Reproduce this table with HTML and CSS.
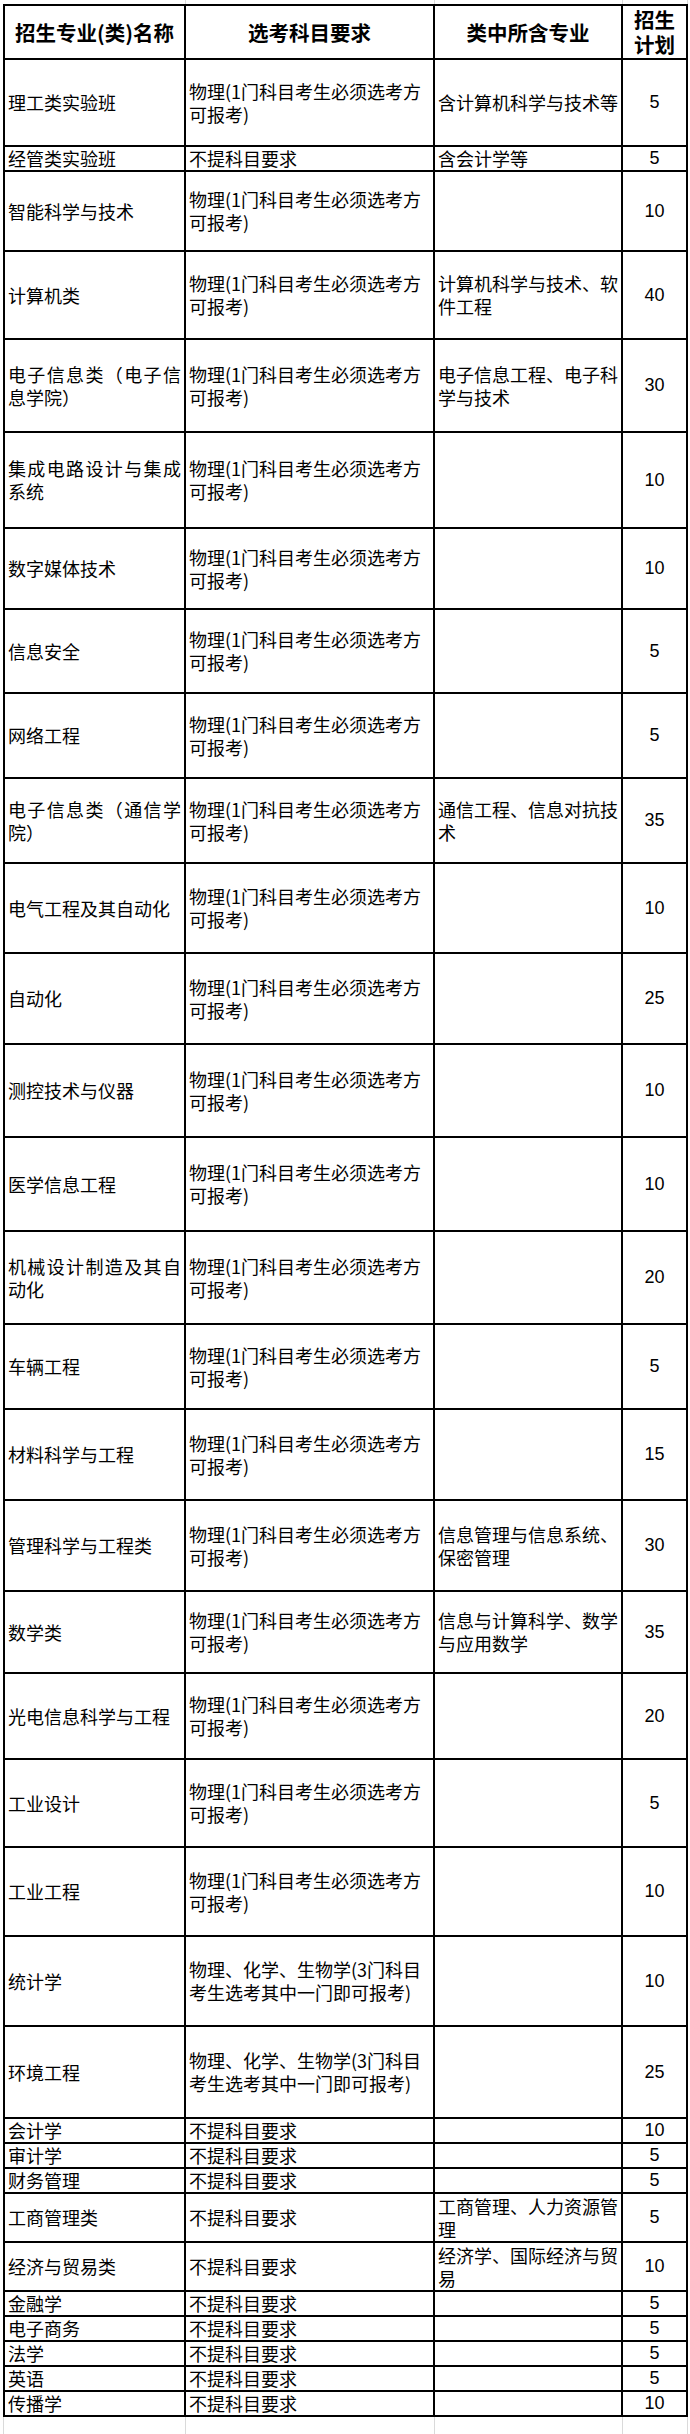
FILE: index.html
```html
<!DOCTYPE html>
<html lang="zh-CN">
<head>
<meta charset="utf-8">
<title>招生专业(类)选考科目要求</title>
<link rel="stylesheet" href="styles.css">
</head>
<body>
<table class="grid">
  <tr class="ghost-top">
    <td class="c1"></td><td class="c2"></td><td class="c3"></td><td class="c4"></td>
  </tr>
  <tr class="head h56">
    <th>招生专业(类)名称</th>
    <th>选考科目要求</th>
    <th>类中所含专业</th>
    <th>招生<br>计划</th>
  </tr>
  <tr class="h87"><td class="name">理工类实验班</td><td class="req">物理(1门科目考生必须选考方<br>可报考)</td><td class="sub">含计算机科学与技术等</td><td class="num">5</td></tr>
  <tr class="h25"><td class="name">经管类实验班</td><td class="req">不提科目要求</td><td class="sub">含会计学等</td><td class="num">5</td></tr>
  <tr class="h80"><td class="name">智能科学与技术</td><td class="req">物理(1门科目考生必须选考方<br>可报考)</td><td class="sub"></td><td class="num">10</td></tr>
  <tr class="h88"><td class="name">计算机类</td><td class="req">物理(1门科目考生必须选考方<br>可报考)</td><td class="sub">计算机科学与技术、软<br>件工程</td><td class="num">40</td></tr>
  <tr class="h93"><td class="name">电子信息类（电子信息学院）</td><td class="req">物理(1门科目考生必须选考方<br>可报考)</td><td class="sub">电子信息工程、电子科<br>学与技术</td><td class="num">30</td></tr>
  <tr class="h96"><td class="name">集成电路设计与集成系统</td><td class="req">物理(1门科目考生必须选考方<br>可报考)</td><td class="sub"></td><td class="num">10</td></tr>
  <tr class="h81"><td class="name">数字媒体技术</td><td class="req">物理(1门科目考生必须选考方<br>可报考)</td><td class="sub"></td><td class="num">10</td></tr>
  <tr class="h84"><td class="name">信息安全</td><td class="req">物理(1门科目考生必须选考方<br>可报考)</td><td class="sub"></td><td class="num">5</td></tr>
  <tr class="h85"><td class="name">网络工程</td><td class="req">物理(1门科目考生必须选考方<br>可报考)</td><td class="sub"></td><td class="num">5</td></tr>
  <tr class="h85"><td class="name">电子信息类（通信学院）</td><td class="req">物理(1门科目考生必须选考方<br>可报考)</td><td class="sub">通信工程、信息对抗技<br>术</td><td class="num">35</td></tr>
  <tr class="h90"><td class="name">电气工程及其自动化</td><td class="req">物理(1门科目考生必须选考方<br>可报考)</td><td class="sub"></td><td class="num">10</td></tr>
  <tr class="h91"><td class="name">自动化</td><td class="req">物理(1门科目考生必须选考方<br>可报考)</td><td class="sub"></td><td class="num">25</td></tr>
  <tr class="h93"><td class="name">测控技术与仪器</td><td class="req">物理(1门科目考生必须选考方<br>可报考)</td><td class="sub"></td><td class="num">10</td></tr>
  <tr class="h94"><td class="name">医学信息工程</td><td class="req">物理(1门科目考生必须选考方<br>可报考)</td><td class="sub"></td><td class="num">10</td></tr>
  <tr class="h93"><td class="name">机械设计制造及其自动化</td><td class="req">物理(1门科目考生必须选考方<br>可报考)</td><td class="sub"></td><td class="num">20</td></tr>
  <tr class="h85"><td class="name">车辆工程</td><td class="req">物理(1门科目考生必须选考方<br>可报考)</td><td class="sub"></td><td class="num">5</td></tr>
  <tr class="h91"><td class="name">材料科学与工程</td><td class="req">物理(1门科目考生必须选考方<br>可报考)</td><td class="sub"></td><td class="num">15</td></tr>
  <tr class="h91"><td class="name">管理科学与工程类</td><td class="req">物理(1门科目考生必须选考方<br>可报考)</td><td class="sub">信息管理与信息系统、<br>保密管理</td><td class="num">30</td></tr>
  <tr class="h82"><td class="name">数学类</td><td class="req">物理(1门科目考生必须选考方<br>可报考)</td><td class="sub">信息与计算科学、数学<br>与应用数学</td><td class="num">35</td></tr>
  <tr class="h86"><td class="name">光电信息科学与工程</td><td class="req">物理(1门科目考生必须选考方<br>可报考)</td><td class="sub"></td><td class="num">20</td></tr>
  <tr class="h88"><td class="name">工业设计</td><td class="req">物理(1门科目考生必须选考方<br>可报考)</td><td class="sub"></td><td class="num">5</td></tr>
  <tr class="h89"><td class="name">工业工程</td><td class="req">物理(1门科目考生必须选考方<br>可报考)</td><td class="sub"></td><td class="num">10</td></tr>
  <tr class="h90"><td class="name">统计学</td><td class="req">物理、化学、生物学(3门科目<br>考生选考其中一门即可报考)</td><td class="sub"></td><td class="num">10</td></tr>
  <tr class="h92"><td class="name">环境工程</td><td class="req">物理、化学、生物学(3门科目<br>考生选考其中一门即可报考)</td><td class="sub"></td><td class="num">25</td></tr>
  <tr class="h25"><td class="name">会计学</td><td class="req">不提科目要求</td><td class="sub"></td><td class="num">10</td></tr>
  <tr class="h25"><td class="name">审计学</td><td class="req">不提科目要求</td><td class="sub"></td><td class="num">5</td></tr>
  <tr class="h25"><td class="name">财务管理</td><td class="req">不提科目要求</td><td class="sub"></td><td class="num">5</td></tr>
  <tr class="h49"><td class="name">工商管理类</td><td class="req">不提科目要求</td><td class="sub">工商管理、人力资源管<br>理</td><td class="num">5</td></tr>
  <tr class="h49"><td class="name">经济与贸易类</td><td class="req">不提科目要求</td><td class="sub">经济学、国际经济与贸<br>易</td><td class="num">10</td></tr>
  <tr class="h25"><td class="name">金融学</td><td class="req">不提科目要求</td><td class="sub"></td><td class="num">5</td></tr>
  <tr class="h25"><td class="name">电子商务</td><td class="req">不提科目要求</td><td class="sub"></td><td class="num">5</td></tr>
  <tr class="h25"><td class="name">法学</td><td class="req">不提科目要求</td><td class="sub"></td><td class="num">5</td></tr>
  <tr class="h25"><td class="name">英语</td><td class="req">不提科目要求</td><td class="sub"></td><td class="num">5</td></tr>
  <tr class="h25"><td class="name">传播学</td><td class="req">不提科目要求</td><td class="sub"></td><td class="num">10</td></tr>
  <tr class="ghost-bottom">
    <td></td><td></td><td></td><td></td>
  </tr>
</table>
</body>
</html>
```
FILE: styles.css
```css
html, body {
  margin: 0;
  padding: 0;
  background: #ffffff;
}

.grid {
  border-spacing: 0;
  table-layout: fixed;
  width: 685px;
  margin-left: 3px;
  font-family: "Noto Sans CJK SC", "Noto Sans", sans-serif;
  font-size: 18px;
  color: #000;
}

.grid td,
.grid th {
  box-sizing: border-box;
  padding: 0 3px 0 3px;
  vertical-align: middle;
  border-right: 2px solid #000;
  border-bottom: 2px solid #000;
  line-height: 23px;
  font-weight: 400;
}

.grid td:first-child,
.grid th:first-child {
  border-left: 2px solid #000;
}

.c1 { width: 183px; }
.c2 { width: 249px; }
.c3 { width: 188px; }
.c4 { width: 65px; }

.ghost-top { height: 4px; }
.grid .ghost-top td {
  border: 0;
  border-right: 1px solid #dadada;
  padding: 0;
  line-height: 0;
}

.ghost-bottom { height: 17px; }
.grid .ghost-bottom td {
  border: 0;
  border-right: 1px solid #dadada;
  padding: 0;
}
.grid .ghost-bottom td:first-child {
  border-left: 1px solid #dadada;
}

.head th {
  border-top: 2px solid #000;
  text-align: center;
  font-weight: 700;
  font-size: 20.5px;
  line-height: 25px;
  padding: 0 2px;
}

.name {
  text-align: justify;
}

.req {
  padding-left: 4px;
  white-space: nowrap;
  text-align: left;
  line-height: 24px;
}

.h25 .req,
.h49 .req {
  line-height: 23px;
}

.sub {
  padding-left: 5px;
  white-space: nowrap;
  text-align: left;
}

.num {
  text-align: center;
  font-family: "Liberation Sans", Arial, sans-serif;
  font-size: 18px;
  padding: 0;
}

.h25 { height: 25px; }
.h49 { height: 49px; }
.h56 { height: 56px; }
.h80 { height: 80px; }
.h81 { height: 81px; }
.h82 { height: 82px; }
.h84 { height: 84px; }
.h85 { height: 85px; }
.h86 { height: 86px; }
.h87 { height: 87px; }
.h88 { height: 88px; }
.h89 { height: 89px; }
.h90 { height: 90px; }
.h91 { height: 91px; }
.h92 { height: 92px; }
.h93 { height: 93px; }
.h94 { height: 94px; }
.h96 { height: 96px; }
```
